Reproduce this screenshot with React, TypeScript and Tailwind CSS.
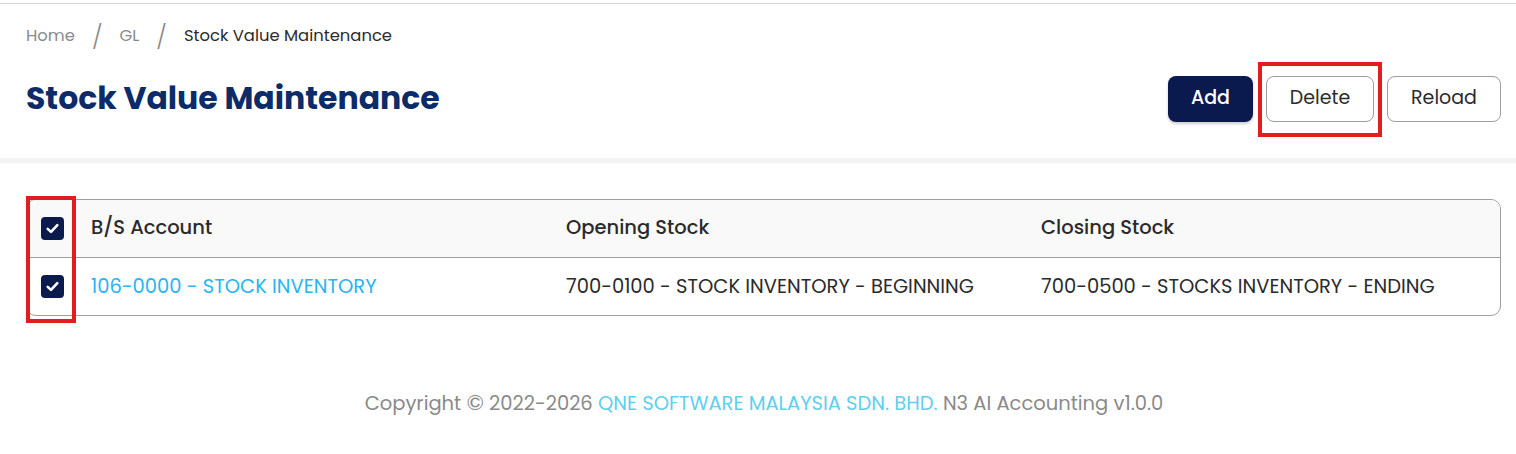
import React from "react";

function Check({ checked }: { checked: boolean }) {
  return (
    <div className="w-[23px] h-[23px] rounded-[4px] bg-[#0b1a4d] flex items-center justify-center">
      {checked && (
        <svg width="15" height="15" viewBox="0 0 14 14" fill="none">
          <path d="M2.5 7.3 L5.6 10.2 L11.5 3.8" stroke="white" strokeWidth="2.4" strokeLinecap="round" strokeLinejoin="round" />
        </svg>
      )}
    </div>
  );
}

export default function App() {
  const font = { fontFamily: "Poppins, Inter, 'Noto Sans', sans-serif" };
  return (
    <div className="w-[1516px] h-[454px] bg-white text-[#2b2b2b]" style={font}>
      <div className="h-[3px]" />
      <div className="border-t border-[#d6d6d6]" />
      {/* Breadcrumb */}
      <div className="h-[63px] flex items-center pl-[26px] pt-[2px] text-[16.4px]">
        <span className="text-[#8a8a8a]">Home</span>
        <span className="text-[#8a8a8a] text-[24px] font-light mx-[17px]">/</span>
        <span className="text-[#8a8a8a]">GL</span>
        <span className="text-[#8a8a8a] text-[24px] font-light mx-[17px]">/</span>
        <span className="text-[#2b2b2b]">Stock Value Maintenance</span>
      </div>
      {/* Header */}
      <div className="mt-[9px] h-[46px] flex items-center justify-between pl-[26px] pr-[15px]">
        <h1 className="text-[31.5px] font-bold text-[#0c2b69]">Stock Value Maintenance</h1>
        <div className="flex gap-[13px]">
          <button className="w-[85px] h-[46px] rounded-[8px] bg-[#0a1a4f] text-white text-[19px] font-medium pb-[2px] shadow-[0_2px_3px_rgba(0,0,0,0.2)]">
            Add
          </button>
          <div className="relative">
            <button className="w-[108px] h-[46px] rounded-[8px] border border-[#9e9e9e] bg-white text-[19px] pb-[2px] text-[#2b2b2b]">
              Delete
            </button>
            <div className="absolute left-[-8px] right-[-8px] top-[-14px] bottom-[-15px] border-[4px] border-[#e21d1d] pointer-events-none" />
          </div>
          <button className="w-[114px] h-[46px] rounded-[8px] border border-[#9e9e9e] bg-white text-[19px] pb-[2px] text-[#2b2b2b]">
            Reload
          </button>
        </div>
      </div>
      <div className="mt-[36px] h-[5px] bg-[#f3f3f3]" />
      {/* Table */}
      <div className="mt-[36px] ml-[26px] mr-[15px] relative">
        <div className="rounded-[10px] border border-[#9e9e9e] overflow-hidden">
          <div className="grid grid-cols-[50px_475px_475px_1fr] h-[57px] bg-[#f9f9f9] items-center text-[19.5px] font-medium text-[#2b2b2b]">
            <div className="flex justify-center"><Check checked /></div>
            <div className="pl-[14px] pb-[1px]">B/S Account</div>
            <div className="pl-[14px] pb-[1px]">Opening Stock</div>
            <div className="pl-[14px] pb-[1px]">Closing Stock</div>
          </div>
          <div className="grid grid-cols-[50px_475px_475px_1fr] h-[58px] border-t border-[#9e9e9e] items-center text-[19.5px] text-[#2b2b2b]">
            <div className="flex justify-center"><Check checked /></div>
            <div className="pl-[14px] text-[#2ab4f2]">106-0000 - STOCK INVENTORY</div>
            <div className="pl-[14px]">700-0100 - STOCK INVENTORY - BEGINNING</div>
            <div className="pl-[14px]">700-0500 - STOCKS INVENTORY - ENDING</div>
          </div>
        </div>
        <div className="absolute left-0 w-[50px] top-[-3px] bottom-[-7px] border-[4px] border-[#e21d1d] pointer-events-none" />
      </div>
      {/* Footer */}
      <div className="mt-[73px] pl-[12px] text-center text-[19.5px] text-[#8a8a8a]">
        Copyright <span className="text-[22px] leading-none">©</span> 2022-2026 <span className="text-[#5fcff0]">QNE SOFTWARE MALAYSIA SDN. BHD.</span> N3 AI Accounting v1.0.0
      </div>
    </div>
  );
}
